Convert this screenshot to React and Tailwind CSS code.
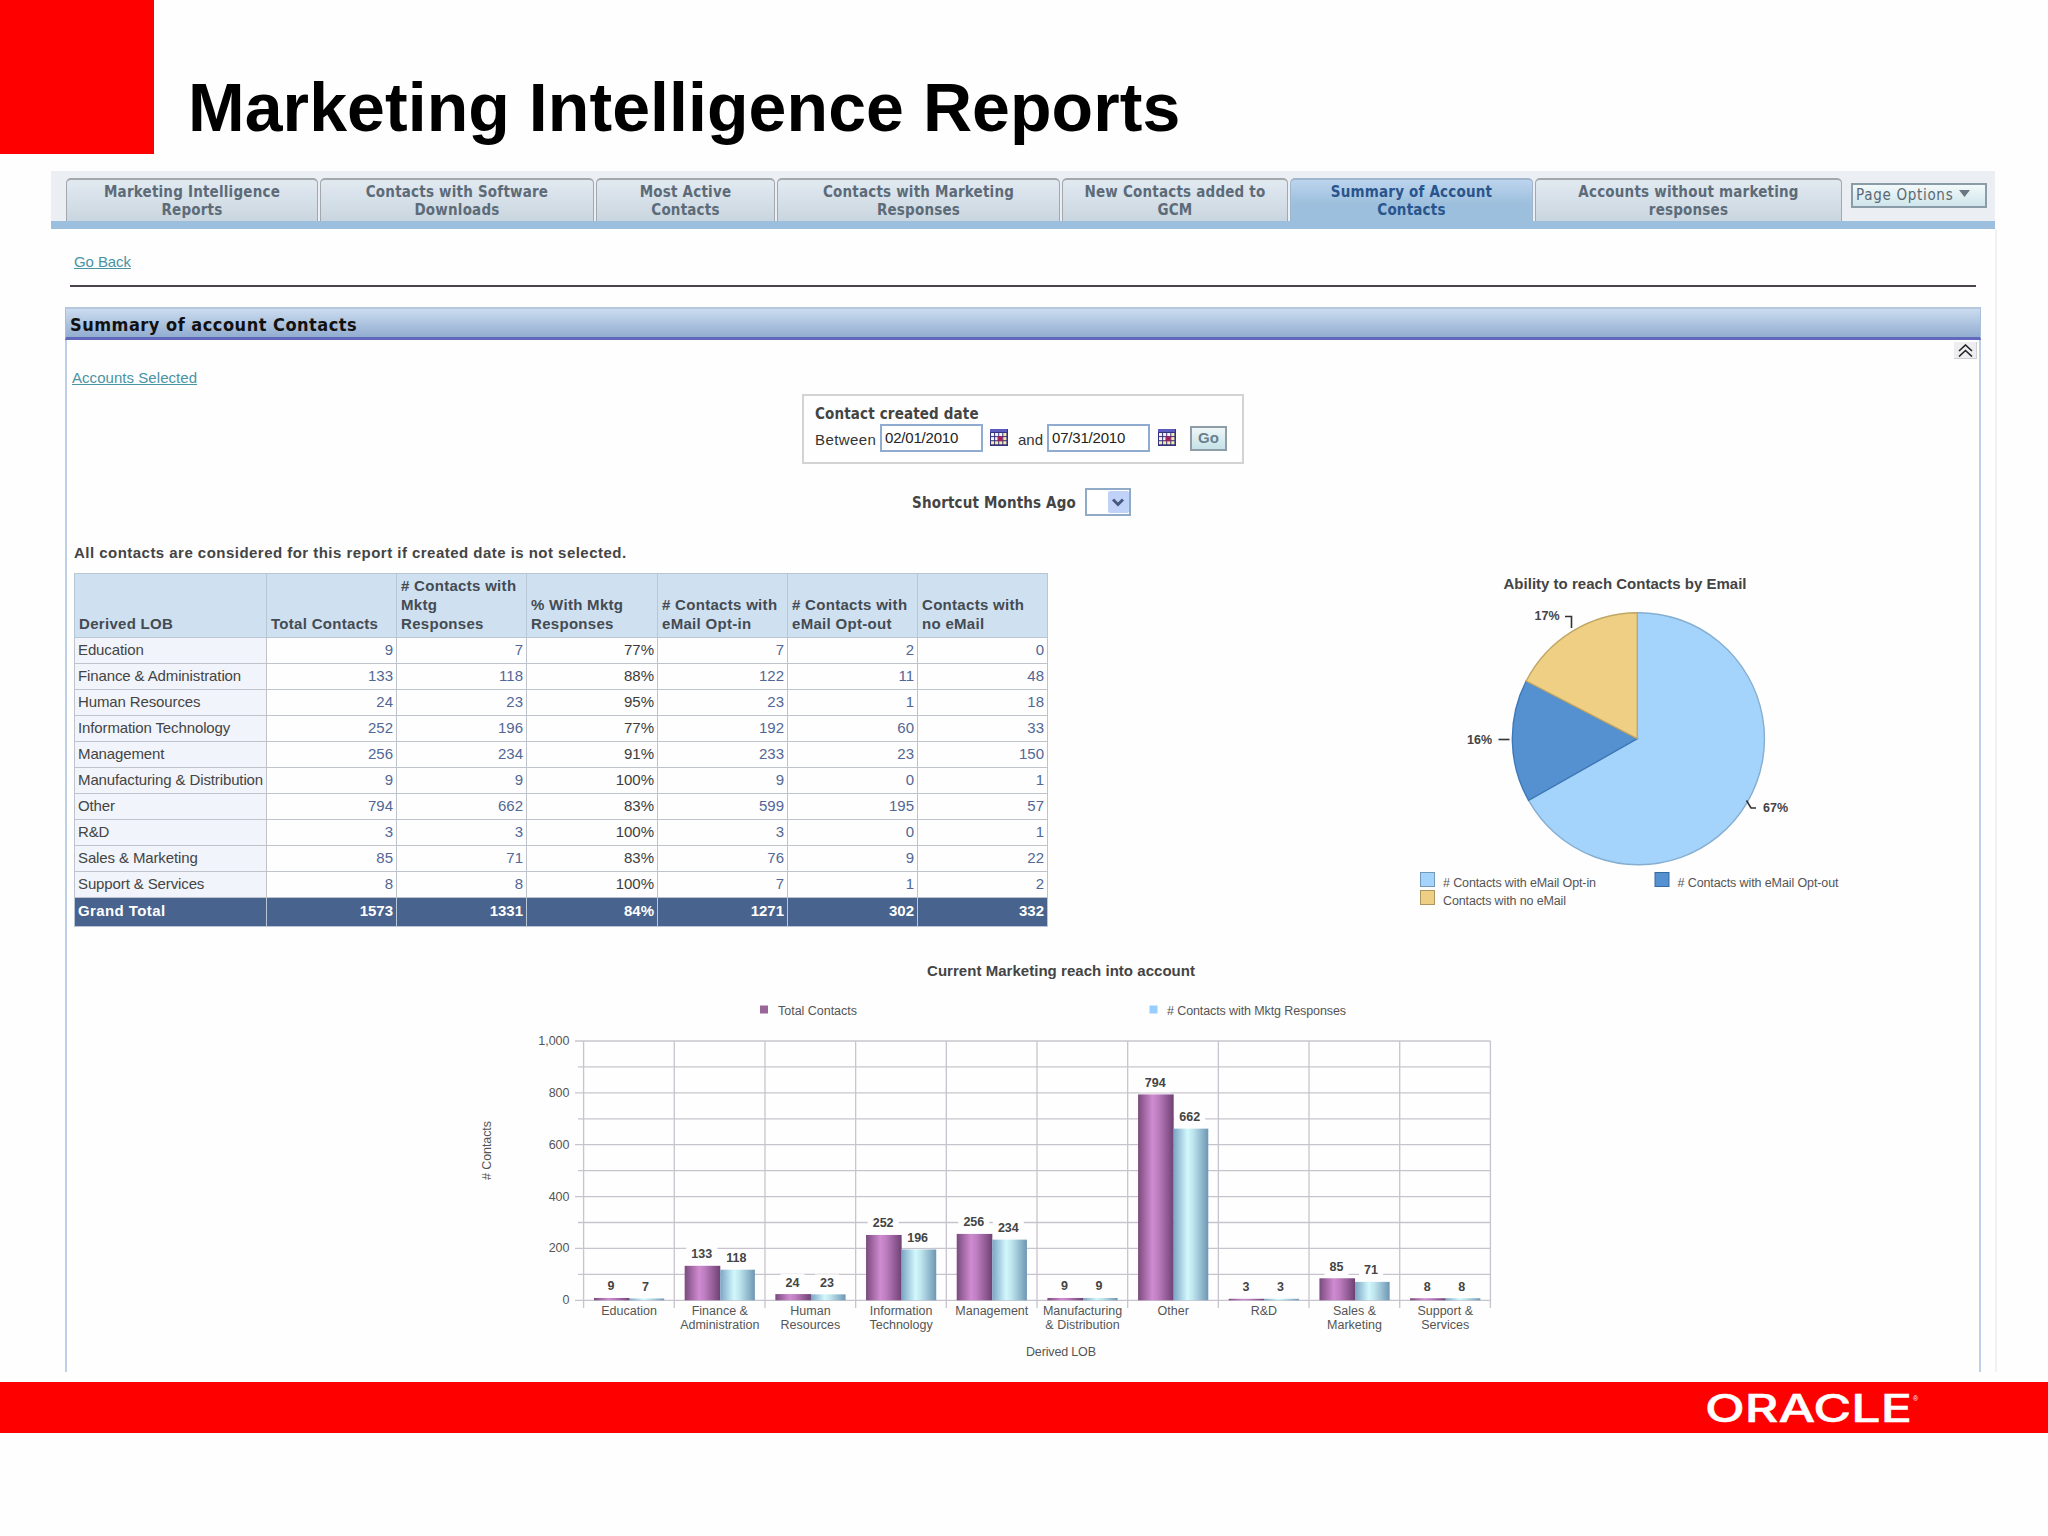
const tabs = [
  { label: ['Marketing Intelligence', 'Reports'], width: 'w-[252px]' },
  { label: ['Contacts with Software', 'Downloads'], width: 'w-[274px]' },
  { label: ['Most Active', 'Contacts'], width: 'w-[179px]' },
  { label: ['Contacts with Marketing', 'Responses'], width: 'w-[283px]' },
  { label: ['New Contacts added to', 'GCM'], width: 'w-[226px]' },
  { label: ['Summary of Account', 'Contacts'], width: 'w-[243px]', active: true },
  { label: ['Accounts without marketing', 'responses'], width: 'w-[307px]' },
]

const columns = [
  { lines: ['Derived LOB'], width: 'w-[192px]' },
  { lines: ['Total Contacts'], width: 'w-[130px]' },
  { lines: ['# Contacts with', 'Mktg', 'Responses'], width: 'w-[130px]' },
  { lines: ['% With Mktg', 'Responses'], width: 'w-[131px]' },
  { lines: ['# Contacts with', 'eMail Opt-in'], width: 'w-[130px]' },
  { lines: ['# Contacts with', 'eMail Opt-out'], width: 'w-[130px]' },
  { lines: ['Contacts with', 'no eMail'], width: 'w-[130px]' },
]

const rows = [
  ['Education', 9, 7, '77%', 7, 2, 0],
  ['Finance & Administration', 133, 118, '88%', 122, 11, 48],
  ['Human Resources', 24, 23, '95%', 23, 1, 18],
  ['Information Technology', 252, 196, '77%', 192, 60, 33],
  ['Management', 256, 234, '91%', 233, 23, 150],
  ['Manufacturing & Distribution', 9, 9, '100%', 9, 0, 1],
  ['Other', 794, 662, '83%', 599, 195, 57],
  ['R&D', 3, 3, '100%', 3, 0, 1],
  ['Sales & Marketing', 85, 71, '83%', 76, 9, 22],
  ['Support & Services', 8, 8, '100%', 7, 1, 2],
]

const totals = ['Grand Total', 1573, 1331, '84%', 1271, 302, 332]

const bars = [
  { label: ['Education'], total: 9, mktg: 7 },
  { label: ['Finance &', 'Administration'], total: 133, mktg: 118 },
  { label: ['Human', 'Resources'], total: 24, mktg: 23 },
  { label: ['Information', 'Technology'], total: 252, mktg: 196 },
  { label: ['Management'], total: 256, mktg: 234 },
  { label: ['Manufacturing', '& Distribution'], total: 9, mktg: 9 },
  { label: ['Other'], total: 794, mktg: 662 },
  { label: ['R&D'], total: 3, mktg: 3 },
  { label: ['Sales &', 'Marketing'], total: 85, mktg: 71 },
  { label: ['Support &', 'Services'], total: 8, mktg: 8 },
]

function TabBar() {
  return (
    <div className="ml-[51px] flex h-[58px] w-[1944px] items-end border-b-8 border-[#9bbfdc] bg-[#ebeff3] pl-[15px]">
      <div className="flex gap-[2px]">
        {tabs.map((t) => (
          <div
            key={t.label[0]}
            className={`h-[43px] shrink-0 rounded-t-[5px] border-x border-t-2 pt-[3px] text-center font-['DejaVu_Sans_Condensed','DejaVu_Sans',sans-serif] text-[15px] leading-[18px] font-bold tracking-[0.2px] ${t.width} ${
              t.active
                ? 'border-[#9fb6cc] bg-linear-to-b from-[#bdd4ee] to-[#9bbfdc] to-60% text-[#2a548c]'
                : 'border-[#a3a8ac] bg-linear-to-b from-[#e2eaf1] to-[#c9d5df] text-[#5d6b78]'
            }`}
          >
            {t.label[0]}
            <br />
            {t.label[1]}
          </div>
        ))}
      </div>
      <button className="mb-[13px] ml-[9px] flex h-[25px] w-[136px] items-center border-2 border-[#8a9ca8] bg-linear-to-b from-[#f3f9fa] to-[#cfe6ec] pl-[3px] font-['DejaVu_Sans_Condensed','DejaVu_Sans',sans-serif] text-[15px] tracking-[0.7px] whitespace-nowrap text-[#5b6872]">
        Page Options
        <svg width="11" height="7" viewBox="0 0 11 7" className="mb-1 ml-[6px]">
          <path d="M0 0h11L5.500 7z" fill="#6b7780" />
        </svg>
      </button>
    </div>
  )
}

function CalendarIcon() {
  return (
    <svg width="18" height="17" viewBox="0 0 18 17">
      <rect width="18" height="17" fill="#34327c" />
      <rect width="17" height="3" fill="#5c5cc0" />
      {[0, 1, 2].map((r) =>
        [0, 1, 2, 3].map((c) => (
          <rect key={`${r}-${c}`} x={1 + c * 4.1} y={4 + r * 4.1} width="3.100" height="3.100" fill={c === 3 || r === 2 ? '#f5e9b0' : '#f4f4fb'} />
        ))
      )}
      <rect x="7.500" y="7.200" width="5" height="5" fill="#a8205a" />
    </svg>
  )
}

function DateInput({ value }) {
  return (
    <input
      readOnly
      value={value}
      className="h-[28px] w-[103px] border-2 border-[#8fabd0] bg-white pb-[2px] pl-[3px] text-[15px] tracking-[-0.2px] text-[#222]"
    />
  )
}

function Filters() {
  return (
    <div className="mt-[6px] ml-[735px] h-[70px] w-[442px] border-2 border-[#d3d3d6] pt-[8px] pl-[11px]">
      <div className="font-['DejaVu_Sans_Condensed','DejaVu_Sans',sans-serif] text-[15px] leading-[20px] font-bold tracking-[0.15px] text-[#444]">
        Contact created date
      </div>
      <div className="flex h-[28px] items-center font-['Liberation_Sans',sans-serif]">
        <span className="mt-1 w-[65px] text-[15px] tracking-[0.4px] text-[#333]">Between</span>
        <DateInput value="02/01/2010" />
        <span className="mb-[2px] ml-[7px]"><CalendarIcon /></span>
        <span className="mt-1 ml-[10px] w-[29px] text-[15px] text-[#333]">and</span>
        <DateInput value="07/31/2010" />
        <span className="mb-[2px] ml-[8px]"><CalendarIcon /></span>
        <button className="ml-[14px] h-[25px] w-[37px] border-2 border-[#8f9ea6] bg-linear-to-b from-[#eef6f7] to-[#c5e2e8] text-[15px] leading-[20px] font-bold text-[#68808e]">
          Go
        </button>
      </div>
    </div>
  )
}

function ContactsTable() {
  return (
    <table className="w-[974px] table-fixed border-collapse border border-[#bcc7d3] font-['Liberation_Sans',sans-serif] text-[15px]">
      <thead>
        <tr className="h-[64px] bg-[#cfe0f0]">
          {columns.map((c) => (
            <th key={c.lines.join()} className={`border border-[#b9c6d3] px-1 pb-[4px] text-left align-bottom leading-[19px] font-bold tracking-[0.3px] whitespace-nowrap text-[#444b52] ${c.width}`}>
              {c.lines.map((l) => <div key={l}>{l}</div>)}
            </th>
          ))}
        </tr>
      </thead>
      <tbody>
        {rows.map((r) => (
          <tr key={r[0]} className="h-[26px]">
            {r.map((v, i) => (
              <td
                key={i}
                className={`border border-[#bfc4cc] px-[3px] pt-0 pb-[2px] leading-[20px] whitespace-nowrap ${
                  i === 0
                    ? 'bg-[#f1f4fa] tracking-[-0.12px] text-[#444]'
                    : i === 3
                      ? 'text-right text-[#3c3c3c]'
                      : 'text-right text-[#526796]'
                }`}
              >
                {v}
              </td>
            ))}
          </tr>
        ))}
        <tr className="h-[29px] bg-[#48638d] font-bold text-white">
          {totals.map((v, i) => (
            <td key={i} className={`border border-[#b9c6d8] px-[3px] pt-0 pb-[2px] leading-[20px] ${i === 0 ? 'tracking-[0.4px]' : 'text-right'}`}>{v}</td>
          ))}
        </tr>
      </tbody>
    </table>
  )
}

function PieChart() {
  return (
    <svg width="500" height="354" viewBox="1380 573 500 354" className="font-['Liberation_Sans',sans-serif]">
      <text x="1504.500" y="589" fontSize="15" fontWeight="bold" fill="#444" textLength="243">Ability to reach Contacts by Email</text>
      <g strokeWidth="1.400">
        <path d="M1638.300 738.700V612.700A126 126 0 1 1 1529.600 800.400Z" fill="#a4d4fb" stroke="#86aed0" />
        <path d="M1638.300 738.700L1529.600 800.400A126 126 0 0 1 1527.200 681Z" fill="#5591d0" stroke="#3d79b8" />
        <path d="M1638.300 738.700L1527.200 681A126 126 0 0 1 1638.300 612.700Z" fill="#efcf83" stroke="#bfa766" />
      </g>
      <g fill="none" stroke="#333" strokeWidth="1.600">
        <path d="M1566 616.500h6.500v11.500" />
        <path d="M1499.500 739.500h11" />
        <path d="M1747.500 800.500l4.500 7.500h5" />
      </g>
      <g fontSize="12.500" fontWeight="bold" fill="#444">
        <text x="1535.500" y="620">17%</text>
        <text x="1468" y="743.500">16%</text>
        <text x="1764" y="812">67%</text>
      </g>
      <g strokeWidth="1">
        <rect x="1421.500" y="872.500" width="14" height="14" fill="#a4d4fb" stroke="#7399b8" />
        <rect x="1421.500" y="890.500" width="14" height="14" fill="#efcf83" stroke="#ab9560" />
        <rect x="1656" y="872.500" width="14" height="14" fill="#5591d0" stroke="#366a9f" />
      </g>
      <g fontSize="12.500" fill="#555">
        <text x="1444" y="887" textLength="153">{'# Contacts with eMail Opt-in'}</text>
        <text x="1444" y="905" textLength="123">Contacts with no eMail</text>
        <text x="1678.500" y="887" textLength="161">{'# Contacts with eMail Opt-out'}</text>
      </g>
    </svg>
  )
}

const LEFT = 583.6
const BOTTOM = 1300.3
const STEP = 90.68
const SCALE = 0.2593

function BarChart() {
  return (
    <svg width="1100" height="422" viewBox="460 950 1100 422" className="font-['Liberation_Sans',sans-serif]">
      <defs>
        <linearGradient id="purple">
          <stop offset="0" stopColor="#7a4a7d" />
          <stop offset="0.400" stopColor="#cf8bd0" />
          <stop offset="0.550" stopColor="#c07fc3" />
          <stop offset="1" stopColor="#6f4173" />
        </linearGradient>
        <linearGradient id="cyan">
          <stop offset="0" stopColor="#7ba5c4" />
          <stop offset="0.400" stopColor="#d2f8fd" />
          <stop offset="0.550" stopColor="#c0e6ee" />
          <stop offset="1" stopColor="#6d96b4" />
        </linearGradient>
      </defs>

      <text x="927" y="976" fontSize="15" fontWeight="bold" fill="#444" textLength="268">Current Marketing reach into account</text>
      <rect x="760" y="1005.500" width="8" height="8" fill="#9a6699" />
      <rect x="1149.500" y="1005.500" width="8" height="8" fill="#99ccff" />
      <g fontSize="12.500" fill="#555">
        <text x="778" y="1014.500" textLength="79">Total Contacts</text>
        <text x="1167" y="1014.500" textLength="179">{'# Contacts with Mktg Responses'}</text>
        <text x="1026" y="1356" textLength="70">Derived LOB</text>
        <text transform="translate(491 1180) rotate(-90)" textLength="59">{'# Contacts'}</text>
      </g>

      <g stroke="#c8c4cd" strokeWidth="1.300">
        {Array.from({ length: 11 }, (_, i) => (
          <line key={i} x1={i % 2 ? 578 : 575} x2="1490.400" y1={BOTTOM - i * 25.93} y2={BOTTOM - i * 25.93} />
        ))}
        {Array.from({ length: 11 }, (_, i) => (
          <line key={i} x1={LEFT + i * STEP} x2={LEFT + i * STEP} y1="1041" y2="1308" />
        ))}
      </g>

      <g fontSize="12.500" fill="#555" textAnchor="end">
        {['0', '200', '400', '600', '800', '1,000'].map((t, i) => (
          <text key={t} x="569.500" y={BOTTOM + 4 - i * 51.86}>{t}</text>
        ))}
      </g>

      {bars.map((b, i) => {
        const x = LEFT + i * STEP
        const h1 = Math.max(b.total * SCALE, 1.500)
        const h2 = Math.max(b.mktg * SCALE, 1.500)
        const w1 = String(b.total).length * 7 + 10
        const w2 = String(b.mktg).length * 7 + 10
        return (
          <g key={b.label[0]} textAnchor="middle">
            <rect x={x + 27.5 - w1 / 2} y={BOTTOM - h1 - 20} width={w1} height="18" fill="#fefefe" />
            <rect x={x + 62 - w2 / 2} y={BOTTOM - h2 - 20} width={w2} height="18" fill="#fefefe" />
            <rect x={x + 10.4} y={BOTTOM - h1} width="35.600" height={h1} fill="url(#purple)" />
            <rect x={x + 46} y={BOTTOM - h2} width="34.600" height={h2} fill="url(#cyan)" />
            <g fontSize="12.500" fontWeight="bold" fill="#444">
              <text x={x + 27.5} y={BOTTOM - h1 - 7.5}>{b.total}</text>
              <text x={x + 62} y={BOTTOM - h2 - 7.5}>{b.mktg}</text>
            </g>
            <g fontSize="12.500" fill="#555">
              {b.label.map((l, n) => (
                <text key={l} x={x + 45.5} y={1315 + n * 13.7}>{l}</text>
              ))}
            </g>
          </g>
        )
      })}
    </svg>
  )
}

function SummaryPanel() {
  return (
    <section className="ml-[14px] w-[1916px]">
      <h2 className="h-[33px] border-x border-t-2 border-b-3 border-x-[#a9c0dd] border-t-[#b6c8dc] border-b-[#6069bb] bg-linear-to-b from-[#cbdcf0] to-[#92add0] pl-[4px] font-['DejaVu_Sans_Condensed','DejaVu_Sans',sans-serif] text-[18px] leading-[31px] font-bold tracking-[0.5px] text-[#111]">
        Summary of account Contacts
      </h2>
      <div className="h-[1032px] border-x-2 border-[#bcd0e6] pt-[2px] font-['Liberation_Sans',sans-serif]">
        <div className="flex justify-end pr-[2px]">
          <button className="flex h-[17px] w-[23px] items-center justify-center border-r border-b border-[#cfcfd2] bg-[#eeeef0]">
            <svg width="15" height="13" viewBox="0 0 15 13" fill="none" stroke="#222" strokeWidth="1.600">
              <path d="M1 7l6.500-6L14 7M1 12.500l6.500-6 6.500 6" />
            </svg>
          </button>
        </div>
        <a className="mt-[9px] ml-[5px] block w-fit text-[15px] leading-[20px] tracking-[0.05px] text-[#4a93a3] underline">Accounts Selected</a>
        <Filters />
        <div className="mt-[24px] flex h-[28px] items-center justify-center pr-[3px]">
          <span className="mr-[9px] pt-[2px] font-['DejaVu_Sans_Condensed','DejaVu_Sans',sans-serif] text-[15px] font-bold tracking-[0.15px] text-[#444]">
            Shortcut Months Ago
          </span>
          <span className="flex h-[28px] w-[46px] items-center justify-end border-2 border-[#8fabc8] bg-white">
            <span className="flex h-[22px] w-[21px] items-center justify-center rounded-[2px] bg-[#c1d2f8]">
              <svg width="12" height="9" viewBox="0 0 12 9" fill="none" stroke="#45597f" strokeWidth="3">
                <path d="M1 1.500l5 5 5-5" />
              </svg>
            </span>
          </span>
        </div>
        <p className="mt-[27px] ml-[7px] text-[15px] leading-[20px] font-bold tracking-[0.47px] text-[#444]">
          All contacts are considered for this report if created date is not selected.
        </p>
        <div className="mt-[10px] ml-[7px] flex h-[354px] items-start">
          <ContactsTable />
          <div className="ml-[331px]">
            <PieChart />
          </div>
        </div>
        <div className="mt-[23px] ml-[393px]">
          <BarChart />
        </div>
      </div>
    </section>
  )
}

export default function App() {
  return (
    <div className="h-[1536px] w-[2048px] overflow-hidden bg-[#fefefe]">
      <header className="flex h-[171px]">
        <div className="size-[154px] bg-[#ff0000]" />
        <h1 className="mt-[68px] ml-[34px] font-['Liberation_Sans',sans-serif] text-[68px] leading-[78px] font-bold tracking-[0.08px] whitespace-nowrap text-black">
          Marketing Intelligence Reports
        </h1>
      </header>
      <TabBar />
      <main className="ml-[51px] h-[1143px] w-[1946px] border-r-2 border-[#f3f0f0]">
        <div className="mx-[19px] h-[58px] border-b-2 border-[#4c444c] pt-[21px] pl-[4px] font-['Liberation_Sans',sans-serif]">
          <a className="text-[15px] leading-[20px] tracking-[-0.1px] text-[#4a93a3] underline">Go Back</a>
        </div>
        <div className="h-[20px]" />
        <SummaryPanel />
      </main>
      <footer className="mt-[10px] flex h-[51px] justify-end bg-[#ff0000] pr-[124px]">
        <svg width="220" height="51" viewBox="0 0 220 51">
          <text x="1" y="39.500" fontFamily="Inter, sans-serif" fontSize="37.500" fontWeight="500" fill="#fff" stroke="#fff" strokeWidth="0.500" textLength="207" lengthAdjust="spacingAndGlyphs">ORACLE</text>
          <text x="209" y="19" fontFamily="Liberation Sans, sans-serif" fontSize="7" fill="#fff">®</text>
        </svg>
      </footer>
    </div>
  )
}
